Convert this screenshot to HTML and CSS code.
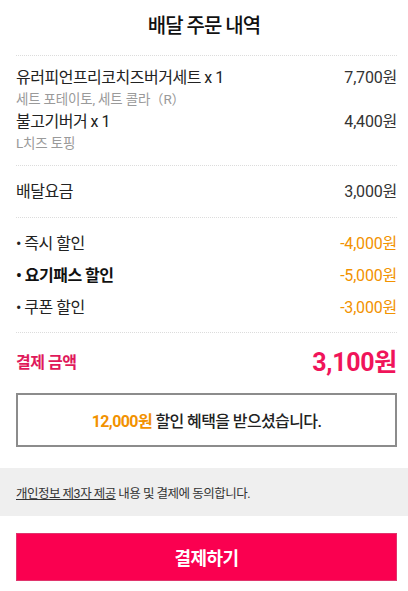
FILE: index.html
```html
<!DOCTYPE html>
<html lang="ko">
<head>
<meta charset="utf-8">
<link rel="stylesheet" href="styles.css">
</head>
<body>
<div class="page">
  <h1 class="title">배달 주문 내역</h1>
  <div class="wrap">
    <section class="sec items">
      <div class="item">
        <div class="row"><span class="name">유러피언프리코치즈버거세트 x 1</span><span class="price">7,700원</span></div>
        <div class="opt">세트 포테이토, 세트 콜라（R）</div>
      </div>
      <div class="item">
        <div class="row"><span class="name">불고기버거 x 1</span><span class="price">4,400원</span></div>
        <div class="opt">L치즈 토핑</div>
      </div>
    </section>
    <section class="sec fee">
      <div class="row"><span class="name">배달요금</span><span class="price">3,000원</span></div>
    </section>
    <section class="sec discounts">
      <div class="row"><span class="name">• 즉시 할인</span><span class="price orange">-4,000원</span></div>
      <div class="row"><span class="name bold">• 요기패스 할인</span><span class="price orange">-5,000원</span></div>
      <div class="row"><span class="name">• 쿠폰 할인</span><span class="price orange">-3,000원</span></div>
    </section>
    <section class="sec total">
      <div class="row"><span class="total-label">결제 금액</span><span class="total-price">3,100원</span></div>
    </section>
    <div class="benefit"><p class="benefit-text"><span class="orange strong">12,000원</span> 할인 혜택을 받으셨습니다.</p></div>
  </div>
  <div class="agree"><p class="agree-text"><span class="link">개인정보 제3자 제공</span> 내용 및 결제에 동의합니다.</p></div>
  <div class="wrap">
    <button class="pay">결제하기</button>
  </div>
</div>
</body>
</html>
```
FILE: styles.css
```css
* { box-sizing: border-box; }
html, body { margin: 0; padding: 0; background: #fff; }
body {
  font-family: Roboto, "Noto Sans CJK KR", sans-serif;
  color: #222;
  width: 408px;
  height: 591px;
  overflow: hidden;
}
.title {
  margin: 0;
  height: 55px;
  line-height: 52px;
  text-align: center;
  font-size: 20px;
  font-weight: 500;
  letter-spacing: -1px;
  color: #111;
}
.wrap { padding: 0 11px 0 16px; }
.sec { border-top: 1px dotted #dcdcdc; }
.row {
  display: flex;
  justify-content: space-between;
  align-items: center;
}
.name { font-size: 16px; letter-spacing: -0.5px; color: #222; }
.price { font-size: 16px; color: #333; letter-spacing: -0.2px; }
.items { padding: 11px 0 12px; }
.items .row { line-height: 22px; }
.item + .item { margin-top: 2px; }
.opt { font-size: 13.5px; line-height: 20px; color: #9a9a9a; letter-spacing: -0.2px; }
.fee { padding: 15px 0 14px; }
.fee .row { line-height: 22px; }
.discounts { padding: 10px 0 8px; }
.discounts .row { line-height: 32px; }
.bold { font-weight: 700; color: #111; }
.orange { color: #f29200; }
.total { padding: 10px 0 0; }
.total .row { line-height: 40px; }
.total-label { font-size: 16px; font-weight: 700; color: #e0195b; letter-spacing: -0.5px; }
.total-price { font-size: 25px; font-weight: 700; color: #f0145a; letter-spacing: -0.3px; }
.benefit {
  margin-top: 10px;
  height: 54px;
  border: 2px solid #8c8c8c;
  display: flex;
  align-items: center;
  justify-content: center;
}
.benefit-text {
  margin: 0;
  font-size: 16px;
  font-weight: 500;
  color: #222;
  letter-spacing: -0.6px;
}
.strong { font-weight: 700; }
.agree {
  margin-top: 21px;
  height: 48px;
  background: #efefef;
  display: flex;
  align-items: center;
  padding-left: 16px;
}
.agree-text {
  margin: 0;
  font-size: 12.5px;
  color: #333;
  letter-spacing: -0.5px;
}
.link { text-decoration: underline; }
.pay {
  display: block;
  width: 100%;
  margin-top: 17px;
  height: 48px;
  border: 1px solid #e0356d;
  background: #fa0050;
  color: #fff;
  font-family: Roboto, "Noto Sans CJK KR", sans-serif;
  font-size: 18px;
  font-weight: 700;
  letter-spacing: -0.5px;
}
```
